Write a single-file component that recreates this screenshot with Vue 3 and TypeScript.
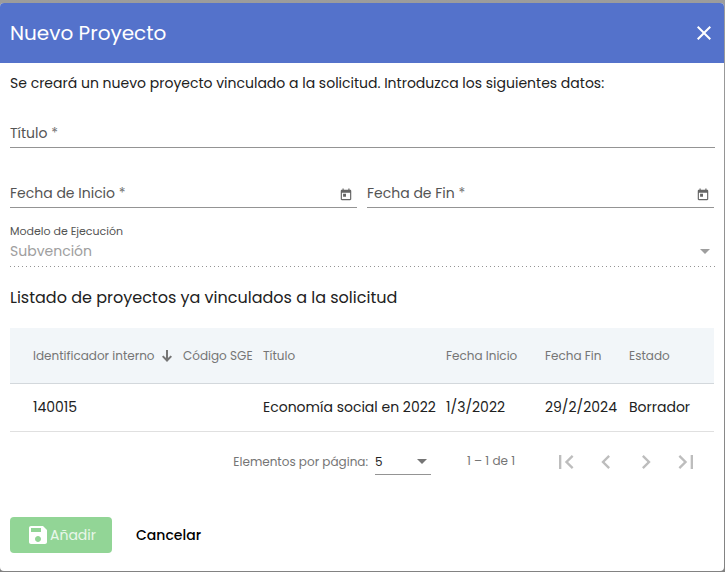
<script setup lang="ts">
import { ref } from 'vue'

interface Project {
  id: string
  sge: string
  title: string
  start: string
  end: string
  status: string
}

const title = ref('')
const startDate = ref('')
const endDate = ref('')
const model = ref('Subvención')
const pageSize = ref(5)

const projects: Project[] = [
  {
    id: '140015',
    sge: '',
    title: 'Economía social en 2022',
    start: '1/3/2022',
    end: '29/2/2024',
    status: 'Borrador',
  },
]

const pageButtons = [
  { label: 'Primera página', path: 'M18.41 16.59L13.82 12l4.59-4.59L17 6l-6 6 6 6zM6 6h2v12H6z' },
  { label: 'Página anterior', path: 'M15.41 7.41L14 6l-6 6 6 6 1.41-1.41L10.83 12z' },
  { label: 'Página siguiente', path: 'M10 6L8.59 7.41 13.17 12l-4.58 4.59L10 18l6-6z' },
  { label: 'Última página', path: 'M5.59 7.41L10.18 12l-4.59 4.59L7 18l6-6-6-6zM16 6h2v12h-2z' },
]
</script>

<template>
  <div class="backdrop">
    <section class="dialog" role="dialog" aria-labelledby="dialog-title">
      <header class="toolbar">
        <h1 id="dialog-title">Nuevo Proyecto</h1>
        <button class="close" type="button" aria-label="Cerrar">
          <svg viewBox="0 0 24 24"><path d="M19 6.41L17.59 5 12 10.59 6.41 5 5 6.41 10.59 12 5 17.59 6.41 19 12 13.41 17.59 19 19 17.59 13.41 12z" /></svg>
        </button>
      </header>

      <form class="content" @submit.prevent>
        <p class="intro">Se creará un nuevo proyecto vinculado a la solicitud. Introduzca los siguientes datos:</p>

        <div class="field">
          <label for="title">Título <span class="mark">*</span></label>
          <input id="title" v-model="title" type="text" required />
        </div>

        <div class="dates">
          <div class="field">
            <label for="start">Fecha de Inicio <span class="mark">*</span></label>
            <input id="start" v-model="startDate" type="text" required />
            <button class="calendar" type="button" aria-label="Abrir calendario">
              <svg viewBox="0 0 24 24"><path d="M19 3h-1V1h-2v2H8V1H6v2H5c-1.11 0-1.99.9-1.99 2L3 19c0 1.1.89 2 2 2h14c1.1 0 2-.9 2-2V5c0-1.1-.9-2-2-2zm0 16H5V8h14v11zM7 10h5v5H7z" /></svg>
            </button>
          </div>
          <div class="field">
            <label for="end">Fecha de Fin <span class="mark">*</span></label>
            <input id="end" v-model="endDate" type="text" required />
            <button class="calendar" type="button" aria-label="Abrir calendario">
              <svg viewBox="0 0 24 24"><path d="M19 3h-1V1h-2v2H8V1H6v2H5c-1.11 0-1.99.9-1.99 2L3 19c0 1.1.89 2 2 2h14c1.1 0 2-.9 2-2V5c0-1.1-.9-2-2-2zm0 16H5V8h14v11zM7 10h5v5H7z" /></svg>
            </button>
          </div>
        </div>

        <div class="model">
          <label for="model">Modelo de Ejecución</label>
          <div class="select-box">
            <select id="model" v-model="model" disabled>
              <option>Subvención</option>
            </select>
            <svg class="arrow" viewBox="0 0 10 5"><path d="M0 0h10L5 5z" /></svg>
          </div>
        </div>

        <h2>Listado de proyectos ya vinculados a la solicitud</h2>

        <table>
          <colgroup>
            <col class="c-id" />
            <col class="c-sge" />
            <col class="c-title" />
            <col class="c-start" />
            <col class="c-end" />
            <col />
          </colgroup>
          <thead>
            <tr>
              <th scope="col">
                <span class="sorted">
                  Identificador interno
                  <svg viewBox="0 0 10 12"><path d="M4 0h2v8l2.6-2.6L10 6.8 5 12 0 6.8l1.4-1.4L4 8z" /></svg>
                </span>
              </th>
              <th scope="col">Código SGE</th>
              <th scope="col">Título</th>
              <th scope="col">Fecha Inicio</th>
              <th scope="col">Fecha Fin</th>
              <th scope="col">Estado</th>
            </tr>
          </thead>
          <tbody>
            <tr v-for="p in projects" :key="p.id">
              <td>{{ p.id }}</td>
              <td>{{ p.sge }}</td>
              <td>{{ p.title }}</td>
              <td>{{ p.start }}</td>
              <td>{{ p.end }}</td>
              <td>{{ p.status }}</td>
            </tr>
          </tbody>
        </table>

        <nav class="paginator" aria-label="Paginación">
          <label for="size">Elementos por página:</label>
          <div class="select-box size">
            <select id="size" v-model="pageSize">
              <option :value="5">5</option>
              <option :value="10">10</option>
              <option :value="25">25</option>
            </select>
            <svg class="arrow" viewBox="0 0 10 5"><path d="M0 0h10L5 5z" /></svg>
          </div>
          <span class="range">1 – 1 de 1</span>
          <div class="pages">
            <button v-for="b in pageButtons" :key="b.label" type="button" :aria-label="b.label" disabled>
              <svg viewBox="0 0 24 24"><path :d="b.path" /></svg>
            </button>
          </div>
        </nav>

        <footer class="actions">
          <button class="add" type="submit" disabled>
            <svg viewBox="0 0 24 24"><path d="M17 3H5c-1.11 0-2 .9-2 2v14c0 1.1.89 2 2 2h14c1.1 0 2-.9 2-2V7l-4-4zm-5 16c-1.66 0-3-1.34-3-3s1.34-3 3-3 3 1.34 3 3-1.34 3-3 3zm3-10H5V5h10v4z" /></svg>
            Añadir
          </button>
          <button class="cancel" type="button">Cancelar</button>
        </footer>
      </form>
    </section>
  </div>
</template>

<style>
body {
  background: #828282;
}
</style>

<style scoped>
* {
  box-sizing: border-box;
}

.backdrop {
  min-height: 100vh;
  padding: 3px 1px 1px 0;
  background: linear-gradient(#9c9c9c, #828282);
  font-family: Poppins, Inter, sans-serif;
  font-size: 14px;
  line-height: 20px;
  color: #212121;
}

.dialog {
  overflow: hidden;
  border-radius: 4px;
  background: #fff;
}

.toolbar {
  display: flex;
  align-items: center;
  justify-content: space-between;
  height: 60px;
  padding: 0 8px 0 10px;
  background: #5472cb;
  color: #fff;
}

h1 {
  margin: 0;
  font-size: 20px;
  font-weight: 400;
}

button,
input,
select {
  margin: 0;
  padding: 0;
  border: 0;
  background: none;
  color: inherit;
  font: inherit;
}

svg {
  display: block;
  fill: currentColor;
}

.close svg {
  width: 24px;
  height: 24px;
}

.content {
  padding: 10px 10px 18px;
}

.intro {
  margin: 0;
}

.field {
  display: grid;
  grid-template-columns: 1fr auto;
  align-items: center;
  height: 25px;
  border-bottom: 1px solid #949494;
}

.intro + .field {
  margin-top: 30px;
  margin-right: -1px;
}

.field label,
.field input {
  grid-area: 1 / 1;
  min-width: 0;
}

.field label {
  padding-bottom: 4px;
  color: #545454;
  pointer-events: none;
}

.mark {
  color: #757575;
}

.field input {
  width: 100%;
  height: 24px;
  outline: none;
}

.calendar {
  padding: 0 4px 2px 0;
  color: #666;
}

.calendar svg {
  width: 14px;
  height: 14px;
}

.dates {
  display: grid;
  grid-template-columns: 1fr 1fr;
  gap: 10px;
  margin-top: 35px;
}

.dates .field label {
  padding-bottom: 6px;
}

.model {
  margin-top: 15px;
  margin-right: -1px;
  padding-bottom: 4px;
  background: repeating-linear-gradient(90deg, #949494 0 1px, #fff 1px 4px) bottom / 100% 1px no-repeat;
}

.model label {
  display: block;
  font-size: 11px;
  line-height: 16px;
  color: #545454;
}

.select-box {
  display: grid;
  align-items: center;
}

.select-box select,
.arrow {
  grid-area: 1 / 1;
}

.select-box select {
  width: 100%;
  height: 24px;
  appearance: none;
  opacity: 1;
  outline: none;
}

.model select {
  color: #9e9e9e;
}

.arrow {
  justify-self: end;
  width: 10px;
  height: 5px;
  margin-right: 5px;
  color: #757575;
  pointer-events: none;
}

.model .arrow {
  color: #9e9e9e;
}

h2 {
  margin: 19px 0 18px;
  font-size: 16px;
  font-weight: 400;
  line-height: 24px;
}

table {
  width: 100%;
  table-layout: fixed;
  border-collapse: separate;
  border-spacing: 0;
}

.c-id {
  width: 173px;
}

.c-sge {
  width: 80px;
}

.c-title {
  width: 183px;
}

.c-start {
  width: 99px;
}

.c-end {
  width: 84px;
}

th,
td {
  padding: 0;
  border-bottom: 1px solid #e0e0e0;
  text-align: left;
  font-weight: 400;
  white-space: nowrap;
}

th {
  height: 56px;
  border-color: #d3d8dc;
  background: #f2f6f9;
  font-size: 12px;
  color: #757575;
}

td {
  height: 48px;
  padding-bottom: 2px;
}

th:first-child,
td:first-child {
  padding-left: 23px;
}

.sorted {
  display: flex;
  align-items: center;
  gap: 7px;
}

.sorted svg {
  width: 10px;
  height: 12px;
}

.paginator {
  display: flex;
  align-items: center;
  justify-content: flex-end;
  height: 60px;
  padding-right: 8px;
  font-size: 12px;
  color: #757575;
}

.size {
  width: 56px;
  margin-left: 7px;
  border-bottom: 1px solid #949494;
}

.size select {
  color: #212121;
}

.size .arrow {
  margin-right: 4px;
}

.range {
  margin: 0 31px 0 36px;
  padding-bottom: 2px;
}

.pages {
  display: flex;
}

.pages button {
  display: grid;
  place-items: center;
  width: 40px;
  height: 40px;
  color: #bdbdbd;
}

.pages svg {
  width: 28px;
  height: 28px;
}

.actions {
  display: flex;
  align-items: center;
  gap: 24px;
  margin-top: 25px;
}

.add {
  display: flex;
  align-items: center;
  justify-content: center;
  min-width: 102px;
  height: 36px;
  border-radius: 4px;
  background: #92d596;
  color: #e9f7ea;
}

.add svg {
  width: 24px;
  height: 24px;
  color: #fff;
}

.cancel {
  height: 36px;
  font-weight: 500;
  color: #000;
}
</style>
